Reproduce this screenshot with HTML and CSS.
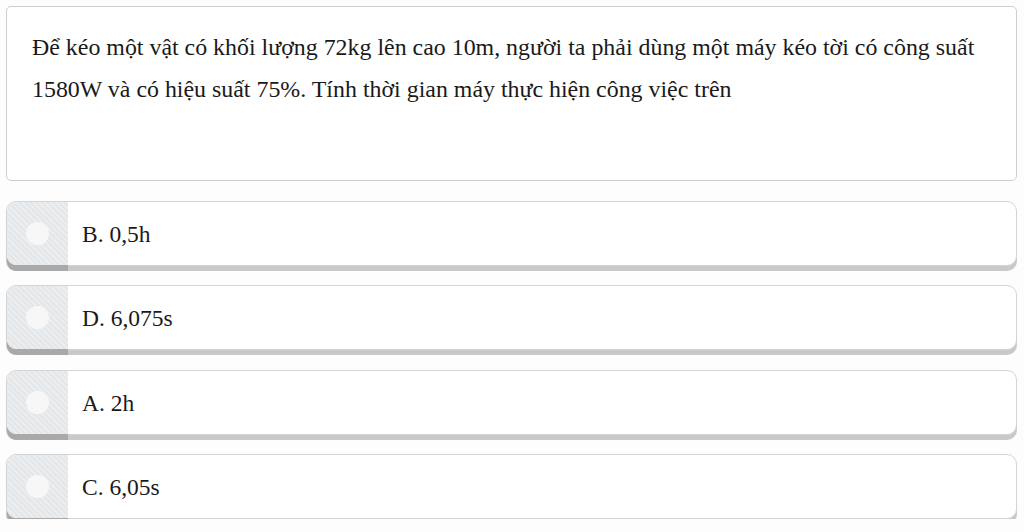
FILE: index.html
```html
<!DOCTYPE html>
<html lang="vi">
<head>
<meta charset="utf-8">
<title>Câu hỏi</title>
<link rel="stylesheet" href="styles.css">
</head>
<body>
<div class="page">
  <div class="question">
    <p>Để kéo một vật có khối lượng 72kg lên cao 10m, người ta phải dùng một máy kéo tời có công suất 1580W và có hiệu suất 75%. Tính thời gian máy thực hiện công việc trên</p>
  </div>
  <div class="options">
    <div class="option"><div class="mark"><span class="dot"></span></div><div class="label">B. 0,5h</div></div>
    <div class="option"><div class="mark"><span class="dot"></span></div><div class="label">D. 6,075s</div></div>
    <div class="option"><div class="mark"><span class="dot"></span></div><div class="label">A. 2h</div></div>
    <div class="option"><div class="mark"><span class="dot"></span></div><div class="label">C. 6,05s</div></div>
  </div>
</div>
</body>
</html>
```
FILE: styles.css
```css
html, body {
  margin: 0;
  padding: 0;
  background: #fdfdfd;
}
.page {
  padding: 6px 7px 0 6px;
  font-family: "Liberation Serif", "Times New Roman", serif;
  color: #1a1a1a;
}
.question {
  box-sizing: border-box;
  height: 175px;
  border: 1px solid #cfcfcf;
  border-radius: 5px;
  background: #fff;
  padding: 19px 20px 0 25px;
}
.question p {
  margin: 0;
  font-size: 23.9px;
  line-height: 42px;
}
.options {
  margin-top: 20px;
  display: flex;
  flex-direction: column;
  gap: 19.3px;
}
.option {
  box-sizing: border-box;
  height: 65px;
  display: flex;
  border: 1px solid #d4d4d4;
  border-radius: 10px;
  background: #fff;
  box-shadow: 0 5px 0 #c9c9c9;
}
.mark {
  width: 61px;
  flex: none;
  display: flex;
  align-items: center;
  justify-content: center;
  border-radius: 9px 0 0 9px;
  background: repeating-linear-gradient(45deg, #e4e7e9 0 2px, #ebedef 2px 4px);
  box-shadow: 0 6px 0 #a9a9a9;
}
.dot {
  width: 23px;
  height: 23px;
  border-radius: 50%;
  background: #f7f7f7;
}
.label {
  display: flex;
  align-items: center;
  padding-left: 14px;
  font-size: 23.5px;
  padding-top: 2px;
}
```
